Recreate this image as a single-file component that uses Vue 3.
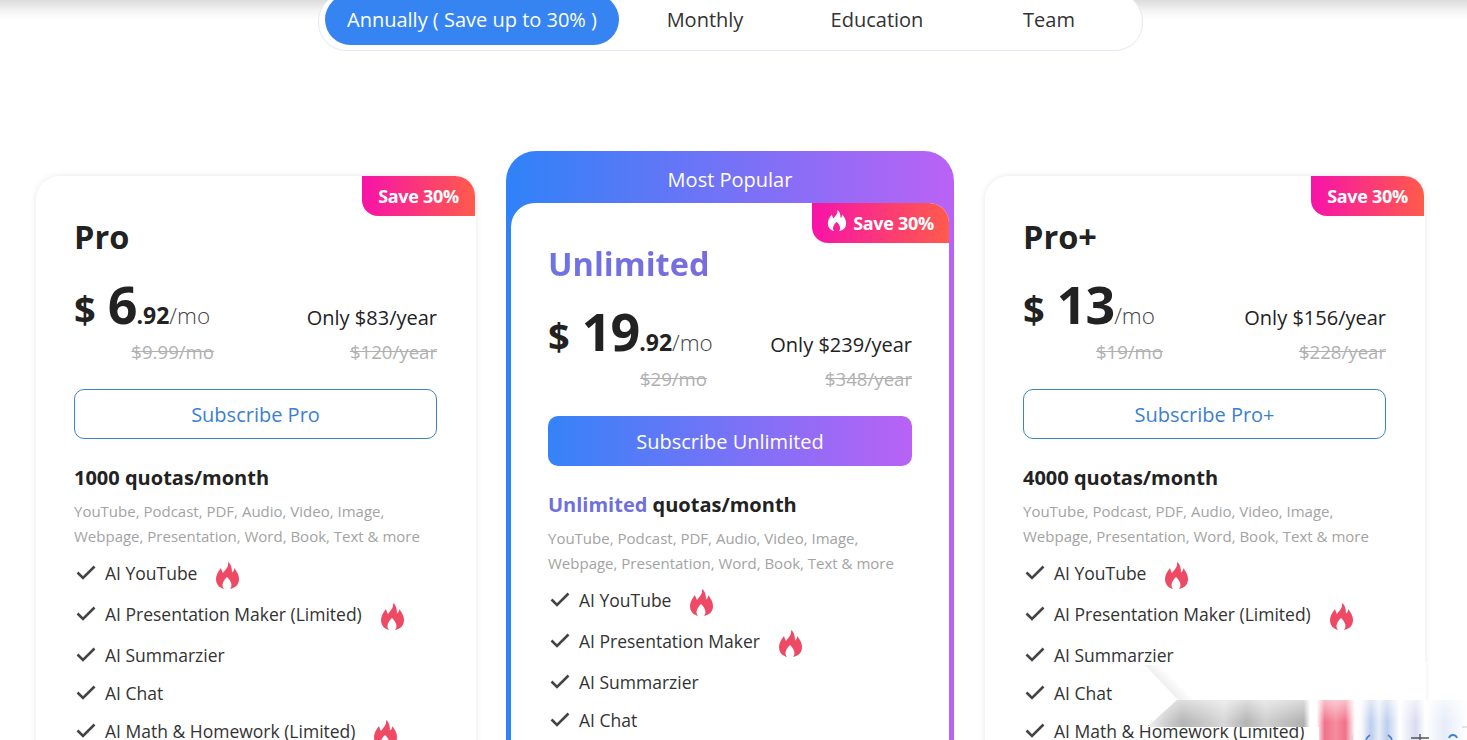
<script setup>
const tabs = ['Annually ( Save up to 30% )', 'Monthly', 'Education', 'Team']
const desc = ['YouTube, Podcast, PDF, Audio, Video, Image,', 'Webpage, Presentation, Word, Book, Text & more']
const plans = [
  {
    name: 'Pro', whole: '6', cents: '.92', mo: '$9.99/mo', year: 'Only $83/year', oldYear: '$120/year', cta: 'Subscribe Pro', quota: '1000',
    features: [['AI YouTube', true], ['AI Presentation Maker (Limited)', true], ['AI Summarzier', false], ['AI Chat', false], ['AI Math & Homework (Limited)', true]],
  },
  {
    name: 'Unlimited', whole: '19', cents: '.92', mo: '$29/mo', year: 'Only $239/year', oldYear: '$348/year', cta: 'Subscribe Unlimited', quota: 'Unlimited', popular: true,
    features: [['AI YouTube', true], ['AI Presentation Maker', true], ['AI Summarzier', false], ['AI Chat', false], ['AI Math & Homework', true]],
  },
  {
    name: 'Pro+', whole: '13', cents: '', mo: '$19/mo', year: 'Only $156/year', oldYear: '$228/year', cta: 'Subscribe Pro+', quota: '4000',
    features: [['AI YouTube', true], ['AI Presentation Maker (Limited)', true], ['AI Summarzier', false], ['AI Chat', false], ['AI Math & Homework (Limited)', true]],
  },
]
const flame = 'M13 1C14 6 10 9 8 12C7 10 6.5 9 6 7C3 11 1 14 1 18C1 24 5 27 9 28C6.5 25 7 21 12 16C17 21 17.5 25 15 28C20 27 24 24 24 18C24 13 21 10 19.5 7C19 9 18.5 10.5 17 11.5C17 7 16 3 13 1Z'
</script>

<template>
  <div class="page">
    <div class="shade"></div>
    <nav class="tabs">
      <button v-for="(t, i) in tabs" :key="t" class="tab" :class="{ active: i === 0 }">{{ t }}</button>
    </nav>

    <div class="plans">
      <section v-for="p in plans" :key="p.name" class="card" :class="{ popular: p.popular }">
        <div v-if="p.popular" class="ribbon">Most Popular</div>
        <div class="body">
          <div class="badge">
            <svg v-if="p.popular" class="badge-flame" viewBox="0 0 25 29"><path :d="flame" fill="#fff" /></svg>
            Save 30%
          </div>
          <h2 class="name">{{ p.name }}</h2>
          <div class="prices">
            <div class="price"><span class="cur">$</span><span class="whole">{{ p.whole }}</span><span class="cents">{{ p.cents }}</span><span class="per">/mo</span></div>
            <div class="only">{{ p.year }}</div>
          </div>
          <div class="olds">
            <s class="old-mo">{{ p.mo }}</s>
            <s class="old-year">{{ p.oldYear }}</s>
          </div>
          <button class="cta">{{ p.cta }}</button>
          <h3 class="quota"><span class="quota-num">{{ p.quota }}</span> quotas/month</h3>
          <p class="desc"><span v-for="d in desc" :key="d">{{ d }}</span></p>
          <ul class="features">
            <li v-for="f in p.features" :key="f[0]" :class="{ hot: f[1] }">
              <svg class="check" viewBox="0 0 20 16"><path d="M1.5 8.5 7 14 18.5 2.5" fill="none" stroke="#444" stroke-width="2.6" /></svg>
              <span>{{ f[0] }}</span>
              <svg v-if="f[1]" class="flame" viewBox="0 0 25 29"><path :d="flame" fill="#ee4a65" /></svg>
            </li>
          </ul>
        </div>
      </section>
    </div>

    <div class="smudge">
      <div class="wipe"></div>
      <div class="streaks"></div>
      <svg class="corner" viewBox="0 0 322 78">
        <path d="M225 73q-3 2-4 5M243 73q3 2 4 5" fill="none" stroke="#4f7fd0" stroke-width="1.6" />
        <path d="M275 72v6M266 76h18" fill="none" stroke="#555" stroke-width="1.4" />
        <path d="M304 76q1-3 4-3t4 3" fill="none" stroke="#3f7fd8" stroke-width="1.8" />
        <path d="M207 73v5M317 65h5" fill="none" stroke="#ccc" stroke-width="1" />
      </svg>
    </div>
  </div>
</template>

<style>
html, body { margin: 0; overflow: hidden; background: #fff; }
</style>

<style scoped>
.page {
  position: relative;
  height: 740px;
  overflow: hidden;
  background: #fff;
  color: #222;
  font-family: "Open Sans", "Noto Sans", sans-serif;
}
.shade {
  position: absolute;
  inset: 0 0 auto 0;
  height: 20px;
  background: linear-gradient(#dcdcdc, #f4f4f4 55%, #fff);
}
.tabs {
  position: relative;
  display: flex;
  box-sizing: border-box;
  width: 825px;
  height: 58px;
  margin: -7px 0 0 318px;
  padding: 0 6px 5px;
  border: 1px solid #e3e9f1;
  border-radius: 28px;
  background: #fff;
}
.tab {
  flex: 0 0 172px;
  padding: 0;
  border: 0;
  border-radius: 26px;
  background: none;
  color: #333;
  font: 400 20px "Open Sans", sans-serif;
}
.tab.active {
  flex-basis: 294px;
  background: #3584f2;
  color: #fff;
}
.plans {
  display: flex;
  align-items: flex-start;
  gap: 30px;
  margin: 100px 0 0 36px;
}
.card {
  box-sizing: border-box;
  flex: 0 0 440px;
  margin-top: 25px;
  border-radius: 24px;
  background: #fff;
  box-shadow: 0 0 6px rgba(0, 0, 0, 0.1);
}
.card + .popular + .card { margin-left: 1px; }
.card.popular {
  flex-basis: 448px;
  margin-top: 0;
  padding: 0 5px;
  border-radius: 30px 30px 0 0;
  background: linear-gradient(90deg, #2f82f8, #bb62f5);
  box-shadow: none;
}
.ribbon {
  display: flex;
  align-items: center;
  justify-content: center;
  height: 52px;
  padding-top: 5px;
  box-sizing: border-box;
  color: #fff;
  font-size: 20px;
}
.body {
  position: relative;
  padding: 38px 39px 60px 38px;
  border-radius: 24px 20px 0 0;
  background: #fff;
}
.popular .body { padding: 38px 37px 60px 37px; }
.badge {
  position: absolute;
  top: 0;
  right: 1px;
  display: flex;
  align-items: center;
  justify-content: center;
  gap: 6px;
  box-sizing: border-box;
  width: 113px;
  height: 40px;
  border-radius: 0 20px 0 16px;
  background: linear-gradient(90deg, #f713a9, #ff5b4b);
  color: #fff;
  font-size: 18px;
  font-weight: 700;
  letter-spacing: -0.3px;
}
.popular .badge { right: 0; width: 137px; }
.badge-flame { width: 20px; height: 23px; margin-top: -5px; }
.name {
  margin: 0;
  color: #222;
  font-size: 32.5px;
  line-height: 46px;
  font-weight: 700;
}
.popular .name {
  width: max-content;
  background: linear-gradient(90deg, #6f73e4, #7a6cdc);
  -webkit-background-clip: text;
  background-clip: text;
  color: transparent;
}
.prices {
  display: flex;
  align-items: flex-start;
  justify-content: space-between;
  margin-top: 13px;
  height: 62px;
  line-height: 62px;
}
.cur { font-size: 38px; font-weight: 700; margin-right: 12px; }
.whole { font-size: 52px; font-weight: 700; letter-spacing: -1px; }
.cents { font-size: 23px; font-weight: 700; }
.per { font-size: 22.5px; font-weight: 300; color: #444; }
.only { font-size: 20px; margin-top: 14px; }
.olds {
  position: relative;
  display: flex;
  justify-content: flex-end;
  margin-top: 4px;
  height: 26px;
  line-height: 26px;
  color: #b0b0b0;
  font-size: 18.6px;
}
.old-mo { position: absolute; right: 223px; }
.popular .old-mo { right: 205px; }
.cta {
  display: block;
  box-sizing: border-box;
  width: 100%;
  height: 50px;
  margin-top: 24px;
  border: 1px solid #3c83c9;
  border-radius: 10px;
  background: #fff;
  color: #3d7fcf;
  font: 400 20px "Open Sans", sans-serif;
}
.popular .cta {
  border: 0;
  background: linear-gradient(90deg, #3583f8, #b962f5);
  color: #fff;
}
.quota {
  margin: 24px 0 0;
  font-size: 20px;
  line-height: 30px;
  font-weight: 700;
}
.popular .quota-num { color: #6f6fdf; }
.desc {
  display: flex;
  flex-direction: column;
  margin: 6px 0 0;
  color: #a3a3a3;
  font-size: 15px;
  line-height: 25px;
}
.features {
  margin: 11px 0 0;
  padding: 0 0 0 2px;
  list-style: none;
  font-size: 17.5px;
  color: #333;
}
.features li {
  display: flex;
  align-items: flex-start;
  height: 38px;
  line-height: 26px;
  white-space: nowrap;
}
.features li.hot { height: 41px; }
.check { flex: none; width: 20px; height: 16px; margin: 4px 9px 0 0; }
.flame { flex: none; width: 25px; height: 29px; margin: 1px 0 0 18px; }
.smudge {
  position: absolute;
  right: 0;
  bottom: 0;
  width: 322px;
  height: 78px;
  pointer-events: none;
}
.wipe {
  position: absolute;
  inset: 0 41px 40px 0;
  background: linear-gradient(45deg, #f0f0f0 25px, #fff 36px);
  clip-path: polygon(0 3px, 100% 0, 100% 100%, 33px 100%);
}
.streaks {
  position: absolute;
  left: 2px;
  right: 0;
  top: 38px;
  bottom: 0;
  clip-path: polygon(30px 0, 100% 0, 100% 100%, 172px 100%, 172px 27px, 0 27px);
  background:
    linear-gradient(rgba(255, 255, 255, 0.55), rgba(255, 255, 255, 0) 55%),
    linear-gradient(90deg, #f0f4f6 0, #cfcfcf 6%, #b5b5b5 11%, #c4c4c4 17%, #d8d8d8 24%, #b4b4b4 31%, #cfcfcf 37%, #b0b0b0 49%, #fff 51%, #fff 53%, #f0728a 55.5%, #f58ea0 59%, #f0728a 62%, #fff 65%, #f8f9fc 67%, #bccdec 70%, #e8eef8 72.5%, #bccdec 75%, #fff 79%, #d8dcef 84%, #fff 87%, #e6ecf8 93%, #fff);
}
.corner {
  position: absolute;
  inset: 0;
  width: 100%;
  height: 100%;
}
</style>
